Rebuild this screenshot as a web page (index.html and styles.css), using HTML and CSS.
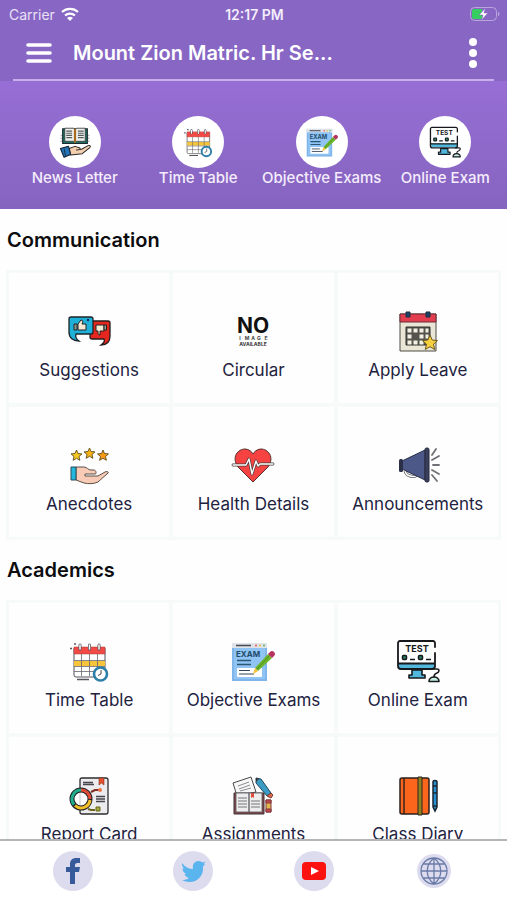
FILE: index.html
```
<!DOCTYPE html>
<html lang="en">
<head>
    <meta charset="UTF-8">
    <meta name="viewport" content="width=device-width, initial-scale=1.0">
    <title>Mount Zion Matric. Hr Sec School</title>
    <link rel="stylesheet" href="styles.css">
</head>
<body>
    <!-- icons used in more than one place -->
    <svg class="sprite" aria-hidden="true">
        <symbol id="icon-timetable" viewBox="0 0 44 44">
            <path d="M7 9h31v27a2 2 0 0 1-2 2H9a2 2 0 0 1-2-2z" fill="#fff" stroke="#55555c"/>
            <path d="M7 8h31v7H7z" fill="#f24b46" stroke="#a33a3a" stroke-width=".5"/>
            <path d="M7 22h31v5H7z" fill="#f7c53a"/>
            <path d="M7 21.500h31M7 27.500h31M7 32.500h31M14.500 15v22M22.500 15v22M30.500 15v22" stroke="#66666c" stroke-width=".8" fill="none"/>
            <path d="M13 6v4M22.500 6v4M32 6v4" stroke="#55555c" stroke-width="3" stroke-linecap="round"/>
            <path d="M13 6v4M22.500 6v4M32 6v4" stroke="#fff" stroke-width="1.500" stroke-linecap="round"/>
            <path d="M3 9.500h2M7 5h2M10 40.500h12" stroke="#55555c" stroke-width="1.500"/>
            <circle cx="33.500" cy="35" r="6.500" fill="#fff" stroke="#2d7fa8" stroke-width="2.600"/>
            <path d="M34 31v4l-3 1.500" fill="none" stroke="#444" stroke-width="1"/>
        </symbol>
        <symbol id="icon-objective" viewBox="0 0 44 44">
            <path d="M1 4h35v38H1z" fill="#7fb5ea"/>
            <path d="M1 4h35v5H1z" fill="#dfe3e8"/>
            <path d="M3 9h31v31H3z" fill="#8fc4f5"/>
            <path d="M5 6.500h15" stroke="#454b55" stroke-width="1.500"/>
            <circle cx="25" cy="6.500" r="1" fill="#e55"/>
            <circle cx="29" cy="6.500" r="1" fill="#e9b83b"/>
            <circle cx="33" cy="6.500" r="1" fill="#5b5"/>
            <text class="exam-text" x="5" y="18">EXAM</text>
            <path d="M6 21.500h14M6 25.500h14" stroke="#2c5674" stroke-width="1.500"/>
            <rect x="6" y="29" width="25" height="9" rx="1" fill="#fff"/>
            <path d="M8 31.500h11M8 35h15" stroke="#345" stroke-width="1.200"/>
            <path d="m24 29 13-14 4 4-14 13z" fill="#6cb52c"/>
            <path d="m25.500 30.500 13-14" stroke="#4c8e20" stroke-width="1"/>
            <path d="m24 29 3 3-5 3z" fill="#f5c33b"/>
            <path d="m37 15 2-2a2.800 2.800 0 0 1 4 4l-2 2z" fill="#b8325f"/>
        </symbol>
        <symbol id="icon-online" viewBox="0 0 44 44">
            <path d="M3 24h36v5H3z" fill="#52b7dc"/>
            <path d="M39 8V4a2 2 0 0 0-2-2H4a2 2 0 0 0-2 2v23a3 3 0 0 0 3 3h31a3 3 0 0 0 3-3V14M3 24.500h36" fill="none" stroke="#17181c" stroke-width="1.800" stroke-linecap="round"/>
            <path d="M16 31h10v5h3v3H13v-3h3z" fill="#52b7dc" stroke="#17181c" stroke-width="1.600" stroke-linejoin="round"/>
            <text class="test-text" x="21" y="13">TEST</text>
            <rect x="6.500" y="16.500" width="4" height="4" rx="1" fill="#2a8060" stroke="#17181c" stroke-width="1.500"/>
            <rect x="22.500" y="16.500" width="4" height="4" rx="1" fill="#2a8060" stroke="#17181c" stroke-width="1.500"/>
            <path d="M14 20.500h5M30 20.500h5" stroke="#17181c" stroke-width="1.500"/>
            <path d="M36 30h5c3 0 2 3.500 0 4s-3 1-3 4" fill="none" stroke="#17181c" stroke-width="1.600"/>
            <path d="M33 42.500c0-6 10-6 10 0z" fill="#c6efe0" stroke="#17181c" stroke-width="1.600" stroke-linejoin="round"/>
        </symbol>
    </svg>

    <header class="header">
        <div class="status-bar">
            <div class="carrier">
                Carrier
                <svg class="wifi" viewBox="0 0 18 14">
                    <path d="M1 5a12 12 0 0 1 16 0M4 8.500a7.500 7.500 0 0 1 10 0" fill="none" stroke="#fff" stroke-width="2.200"/>
                    <path d="M9 14 6 11a4.500 4.500 0 0 1 6 0z" fill="#fff"/>
                </svg>
            </div>
            <div class="time">12:17 PM</div>
            <svg class="battery" viewBox="0 0 30 14">
                <rect x=".5" y=".5" width="26" height="13" rx="4" fill="none" stroke="#b9a5dc"/>
                <path d="M4 2h8v10H4a2 2 0 0 1-2-2V4a2 2 0 0 1 2-2z" fill="#35cf5f"/>
                <path d="M28 5c2 .5 2 3.500 0 4z" fill="#b9a5dc"/>
                <path d="M15.500 1 9 8h4l-1.500 5L18 6h-4z" fill="#fff" stroke="#8766c4" stroke-width=".6"/>
            </svg>
        </div>
        <div class="title-bar">
            <button class="icon-button" aria-label="Menu">
                <svg class="menu-icon" viewBox="0 0 26 20"><path d="M2 2h22M2 10h22M2 18h22" stroke="#fff" stroke-width="3.600" stroke-linecap="round"/></svg>
            </button>
            <h1>Mount Zion Matric. Hr Se...</h1>
            <button class="icon-button" aria-label="More">
                <svg class="more-icon" viewBox="0 0 8 30"><circle cx="4" cy="4" r="4"/><circle cx="4" cy="15" r="4"/><circle cx="4" cy="26" r="4"/></svg>
            </button>
        </div>
    </header>

    <nav class="quick">
        <a href="#newsletter">
            <span class="circle">
                <svg viewBox="0 0 44 44">
                    <path d="M5 4h34v20H5z" fill="#1f6b62" stroke="#1b2c30" stroke-width="1.500"/>
                    <path d="M8 3h12l2 2 2-2h12v18H24l-2 2-2-2H8z" fill="#eef0ee" stroke="#333" stroke-width="1"/>
                    <path d="M22 4v19" stroke="#a9691f" stroke-width="3"/>
                    <path d="M10 7h8M10 10h8M10 13h8M10 16h8M26 7h8M26 10h8M26 13h8M26 16h8" stroke="#555b5b" stroke-width="1.600"/>
                    <path d="M3 12v12M41 12v12" stroke="#777" stroke-dasharray="2 2"/>
                    <path d="m14 31 8-3 6 2c2 1 1 3-1 3h-3l7-1 9-5c3-1 4 1 2 3l-10 8-16 2z" fill="#f4cfae" stroke="#262626" stroke-width="1.400" stroke-linejoin="round"/>
                    <path d="m2 31 11-3 3 11-9 4z" fill="#2476ba" stroke="#18283c" stroke-width="1.600" stroke-linejoin="round"/>
                    <path d="m7 31 2 10" stroke="#18283c" stroke-width="1.200"/>
                </svg>
            </span>
            News Letter
        </a>
        <a href="#timetable"><span class="circle"><svg><use href="#icon-timetable"/></svg></span>Time Table</a>
        <a href="#objective"><span class="circle"><svg><use href="#icon-objective"/></svg></span>Objective Exams</a>
        <a href="#online"><span class="circle"><svg><use href="#icon-online"/></svg></span>Online Exam</a>
    </nav>

    <main class="content">
        <h2>Communication</h2>
        <div class="grid">
            <a class="card" href="#suggestions">
                <svg viewBox="0 0 44 44">
                    <path d="M24 12h17a2 2 0 0 1 2 2v13c0 6-3 9-9 9 3-2 4-4 3-6H25a2 2 0 0 1-2-2z" fill="#e5261f" stroke="#241c1c" stroke-width="1.300"/>
                    <path d="M4 8h20a2 2 0 0 1 2 2v13a2 2 0 0 1-2 2H9c-1 3 0 5 3 7-6 0-10-3-10-9V10a2 2 0 0 1 2-2z" fill="#1fb0d8" stroke="#1c2428" stroke-width="1.300"/>
                    <path d="M11 15l3-4c2 0 2 2 1 4h4v6h-8z" fill="#f4ead4" stroke="#222" stroke-width="1"/>
                    <path d="M7 15h3v6H7z" fill="#8d9b8f" stroke="#222" stroke-width="1"/>
                    <path d="M29 16h8v6h-4v4c-2 0-2-2-2-4h-2z" fill="#f4ead4" stroke="#222" stroke-width="1"/>
                    <path d="M37 16h2.500v5H37z" fill="#8d9b8f" stroke="#222" stroke-width="1"/>
                    <circle cx="21" cy="11" r="1.200" fill="#1b2860"/>
                </svg>
                Suggestions
            </a>
            <a class="card" href="#circular">
                <svg viewBox="0 0 44 44">
                    <text class="no-text" x="22" y="24">NO</text>
                    <text class="image-text" x="9 16 22 28 35" y="31">IMAGE</text>
                    <text class="available-text" x="22" y="37">AVAILABLE</text>
                </svg>
                Circular
            </a>
            <a class="card" href="#leave">
                <svg viewBox="0 0 44 44">
                    <path d="M4 5h36v37H4z" fill="#e9e6d6" stroke="#4d4a45"/>
                    <path d="M4 5h36v8H4z" fill="#e23e4f" stroke="#6d2b35"/>
                    <path d="M10 3h4v5h-4zM30 3h4v5h-4z" fill="#1d4468" stroke="#1c2d3e"/>
                    <path d="M10 18h24v18H10z" fill="#55544c" stroke="#33332e"/>
                    <path d="M11.500 19.500h4v4h-4zm6 0h4v4h-4zm6 0h4v4h-4zm6 0h3v4h-3zm-18 6h4v4h-4zm12 0h4v4h-4zm6 0h3v4h-3zm-18 6h4v4h-4zm6 0h4v4h-4zm6 0h4v4h-4z" fill="#f3f1e4"/>
                    <path d="m34 26 2.200 5 5.300.6-4 3.600 1.200 5.300-4.700-2.800-4.700 2.800 1.200-5.300-4-3.600 5.300-.6z" fill="#f6cf3e" stroke="#6d5a20"/>
                </svg>
                Apply Leave
            </a>
            <a class="card" href="#anecdotes">
                <svg viewBox="0 0 44 44">
                    <g stroke="#5d4d1d" stroke-width=".9">
                        <path d="m9.500 7 1.500 3.500 4 .4-3 2.600.9 3.800-3.400-2-3.400 2 .9-3.800-3-2.600 4-.4z" fill="#f7c820"/>
                        <path d="m22.500 5 1.500 3.500 4 .4-3 2.600.9 3.800-3.400-2-3.400 2 .9-3.800-3-2.600 4-.4z" fill="#f8b417"/>
                        <path d="m36 7 1.500 3.500 4 .4-3 2.600.9 3.800-3.400-2-3.400 2 .9-3.800-3-2.600 4-.4z" fill="#f59a14"/>
                    </g>
                    <path d="M9 24h8c3 0 4 3 7 3h3c2 0 3 4 1 4H18v2h13l7-4c2-1 4 0 3 1L31 39c-4 2-10 2-14 1l-8-3z" fill="#f8cbb6" stroke="#5b5048"/>
                    <path d="M4 24h5v13H4z" fill="#22b8de" stroke="#2d4a58"/>
                </svg>
                Anecdotes
            </a>
            <a class="card" href="#health">
                <svg viewBox="0 0 44 44">
                    <path d="M22 39 7 24C0 14 7 6 14 6c4 0 7 3 8 5 1-2 4-5 8-5 7 0 14 8 7 18z" fill="#f64240" stroke="#54302e"/>
                    <path d="M2 22h13l3-6 3 15 4-13 2 5 2-2h13" fill="none" stroke="#4b3c3c" stroke-width="2.800" stroke-linejoin="round" stroke-linecap="round"/>
                    <path d="M2 22h13l3-6 3 15 4-13 2 5 2-2h13" fill="none" stroke="#fff" stroke-width="1.400" stroke-linejoin="round" stroke-linecap="round"/>
                </svg>
                Health Details
            </a>
            <a class="card" href="#announcements">
                <svg viewBox="0 0 44 44">
                    <path d="M9 28c1 5 9 7 12 4" fill="none" stroke="#55565c" stroke-width="3"/>
                    <path d="M9 28c1 5 9 7 12 4" fill="none" stroke="#fff" stroke-width="1.400"/>
                    <path d="M6 18 29 7v30L6 26z" fill="#4b5888" stroke="#2b3048"/>
                    <rect x="3" y="16" width="4" height="13" rx="1.500" fill="#2b3048"/>
                    <rect x="29" y="5" width="4" height="34" rx="1.500" fill="#393f5c" stroke="#262a3c"/>
                    <path d="m36 12 4-6M36 17l7-4M37 22h6M36 27l7 4M36 32l5 6" stroke="#707176" stroke-width="1.800" stroke-linecap="round"/>
                </svg>
                Announcements
            </a>
        </div>

        <h2>Academics</h2>
        <div class="grid">
            <a class="card" href="#timetable"><svg><use href="#icon-timetable"/></svg>Time Table</a>
            <a class="card" href="#objective"><svg><use href="#icon-objective"/></svg>Objective Exams</a>
            <a class="card" href="#online"><svg><use href="#icon-online"/></svg>Online Exam</a>
            <a class="card" href="#report">
                <svg viewBox="0 0 44 44">
                    <rect x="13" y="5" width="28" height="36" rx="2" fill="#ececee" stroke="#2d2d31" stroke-width="1.300"/>
                    <path d="M32 5h5v7l-2.500-2-2.500 2z" fill="#e5502f" stroke="#80321f" stroke-width=".6"/>
                    <path d="M16 9.500h10M16 11.500h11M29 23.500h9M29 26h9M29 28.500h9" stroke="#45454b" stroke-width="1.500"/>
                    <path d="m24 19 4-2h5" fill="none" stroke="#7f3023" stroke-width="2"/>
                    <circle cx="33" cy="17" r="2" fill="#ef7447"/>
                    <path d="m21 36 3 1h4" fill="none" stroke="#6f661d" stroke-width="2"/>
                    <path d="M29 34h4v4h-4z" fill="#a3a83b" stroke="#66691c"/>
                    <circle cx="14" cy="26" r="9" fill="#fff" fill-opacity=".8" stroke="#252529" stroke-width="5"/>
                    <path d="M14 17a9 9 0 0 0-7 14.600" fill="none" stroke="#1fad8c" stroke-width="3"/>
                    <path d="M14 17a9 9 0 0 1 9 9" fill="none" stroke="#e14c35" stroke-width="3"/>
                    <path d="M23 27a9 9 0 0 1-15 5.500" fill="none" stroke="#f2bf27" stroke-width="3"/>
                </svg>
                Report Card
            </a>
            <a class="card" href="#assignments">
                <svg viewBox="0 0 44 44">
                    <path d="m2 10 18-6 5 15-19 4z" fill="#f7f7f7" stroke="#48484c"/>
                    <path d="m7 13 11-4M8 16l11-4M9 18l11-3" stroke="#8c8c90"/>
                    <path d="m25 5 5 1 10 14-4 3-11-13z" fill="#3a9cc4" stroke="#25485b"/>
                    <path d="m25 5 3 1-3 3z" fill="#333"/>
                    <path d="m36 23 4-3 2 2-2 3z" fill="#dc6a4d" stroke="#7c372e"/>
                    <path d="M3 20h30v21H3z" fill="#85474b" stroke="#3f3337"/>
                    <path d="M5 20h13v19H5zM18 20h13v19H18z" fill="#ededed" stroke="#57575c" stroke-width=".8"/>
                    <path d="M7 25h9M7 28h9M7 31h9M7 34h9M20 28h9M20 31h9M20 34h9" stroke="#77777b"/>
                    <path d="M20 20h3v5l-1.500-1-1.500 1z" fill="#dd4c3d"/>
                    <path d="M35 27h5v12h-5z" fill="#e3b94e" stroke="#80373b"/>
                    <path d="M35 27h5v3h-5zM35 36h5v3h-5z" fill="#c9484f" stroke="#80373b"/>
                </svg>
                Assignments
            </a>
            <a class="card" href="#diary">
                <svg viewBox="0 0 44 44">
                    <rect x="4" y="5" width="29" height="36" rx="2" fill="#fb651c" stroke="#2a201c" stroke-width="1.500"/>
                    <path d="M8 5v36" stroke="#2a201c" stroke-width="1.400"/>
                    <path d="M22 4h4v38h-4z" fill="#908022" stroke="#2a261c"/>
                    <path d="M37 9c0-2 4-2 4 0v25l-2 4-2-4z" fill="#258fd0" stroke="#1b2730" stroke-width="1.500"/>
                    <path d="M37 13h4M37 20h4M37 33h4" stroke="#1b2730" stroke-width="1.300"/>
                </svg>
                Class Diary
            </a>
        </div>
    </main>

    <footer class="footer">
        <a href="#facebook" aria-label="Facebook">
            <svg viewBox="0 0 40 40"><path d="M17 33V21h-4v-5h4v-3c0-4 3-6 6-6h4v5h-3c-1 0-2 1-2 2v2h5l-1 5h-4v12z" fill="#375a9b"/></svg>
        </a>
        <a href="#twitter" aria-label="Twitter">
            <svg viewBox="0 0 40 40"><path d="M9 12c3 4 7 6 11 6-1-5 2-8 5.500-8 2 0 3 1 4 1.500l3-1-2 3 2-.5-2.500 2.500C31 25 24 31 17 31c-3.500 0-6-1-8-2 3 0 5-.5 7-2-2-.5-4-2-4.500-4h2c-3-1-4-3-4-6l2 1c-2-2-3-4-2.500-6z" fill="#5ab4ee"/></svg>
        </a>
        <a href="#youtube" aria-label="YouTube">
            <svg viewBox="0 0 40 40"><rect x="8" y="11" width="24" height="18" rx="4" fill="#fc120e"/><path d="m17 16 8 4-8 4z" fill="#fff"/></svg>
        </a>
        <a class="web" href="#website" aria-label="Website">
            <svg viewBox="0 0 34 34"><path d="M17 4a13 13 0 1 0 0 26 13 13 0 1 0 0-26zm0 0v26M4 17h26M6 10h22M6 24h22M17 4c-9 7-9 19 0 26M17 4c9 7 9 19 0 26" fill="none" stroke="#6b7ba8" stroke-width="1.300"/></svg>
        </a>
    </footer>
</body>
</html>
```

FILE: styles.css
```
* {
    box-sizing: border-box;
}

body {
    display: flex;
    flex-direction: column;
    height: 100vh;
    margin: 0;
    font-family: Inter, "Liberation Sans", sans-serif;
    background-color: #fefefe;
}

a {
    text-decoration: none;
}

.sprite {
    display: none;
}

/* header */
.header {
    padding: 0 13px;
    background-color: #8766c4;
    color: white;
}

.status-bar {
    display: grid;
    grid-template-columns: 1fr auto 1fr;
    align-items: center;
    height: 28px;
    margin: 0 -6px 0 -4px;
    font-size: 14px;
}

.carrier {
    display: flex;
    align-items: center;
    gap: 6px;
    color: #e9e0f6;
}

.wifi {
    width: 18px;
    height: 14px;
}

.time {
    font-weight: 600;
    color: #f3edfb;
}

.battery {
    width: 30px;
    height: 14px;
    justify-self: end;
}

.title-bar {
    display: flex;
    align-items: center;
    height: 53px;
    padding: 0 17px 2px 13px;
    border-bottom: 2px solid #c7afeb;
}

.title-bar h1 {
    flex: 1;
    margin: 0 0 0 21px;
    font-size: 20px;
    font-weight: 600;
    white-space: nowrap;
}

.icon-button {
    display: flex;
    padding: 0;
    border: none;
    background: none;
    cursor: pointer;
}

.menu-icon {
    width: 26px;
    height: 20px;
}

.more-icon {
    width: 8px;
    height: 30px;
    fill: white;
}

/* shortcuts */
.quick {
    display: grid;
    grid-template-columns: repeat(4, 1fr);
    padding: 35px 0 21px 13px;
    background: linear-gradient(#976ed5, #8564bf);
}

.quick a {
    display: flex;
    flex-direction: column;
    align-items: center;
    color: #f5edfc;
    font-size: 15px;
    font-weight: 500;
    line-height: 20px;
    white-space: nowrap;
}

.circle {
    display: flex;
    align-items: center;
    justify-content: center;
    width: 52px;
    height: 52px;
    border-radius: 50%;
    background-color: white;
}

.circle svg {
    width: 32px;
    height: 32px;
}

/* sections */
.content {
    flex: 1;
    min-height: 0;
    padding-top: 1px;
    overflow: hidden;
}

.content h2 {
    margin: 0;
    padding-left: 7px;
    font-size: 20px;
    font-weight: 600;
    line-height: 60px;
    color: #0c0c0e;
}

.grid {
    display: grid;
    grid-template-columns: repeat(3, 1fr);
    gap: 4px;
    margin: 0 6px;
    padding: 3px;
    background-color: #f6faf9;
}

.card {
    display: flex;
    flex-direction: column;
    align-items: center;
    gap: 5px;
    height: 130px;
    padding-top: 36px;
    background-color: #fefefe;
    color: #22223f;
    font-size: 17px;
    line-height: 24px;
    white-space: nowrap;
}

.card svg {
    width: 44px;
    height: 44px;
}

.exam-text,
.test-text,
.no-text,
.image-text,
.available-text {
    font-weight: 700;
}

.exam-text {
    font-size: 8px;
    fill: #234b69;
}

.test-text {
    font-size: 9px;
    text-anchor: middle;
    fill: #17181c;
}

.no-text {
    font-size: 21px;
    text-anchor: middle;
    fill: #111;
}

.image-text {
    font-size: 5px;
    text-anchor: middle;
    fill: #444;
}

.available-text {
    font-size: 5px;
    text-anchor: middle;
    fill: #333;
}

/* social links */
.footer {
    display: grid;
    grid-template-columns: repeat(4, 1fr);
    align-items: center;
    justify-items: center;
    height: 61px;
    padding: 0 13px;
    border-top: 2px solid #b5b5b7;
    background-color: white;
}

.footer a {
    display: flex;
    width: 40px;
    height: 40px;
    border-radius: 50%;
    background-color: #dcdcee;
}

.footer .web {
    width: 34px;
    height: 34px;
}
```
